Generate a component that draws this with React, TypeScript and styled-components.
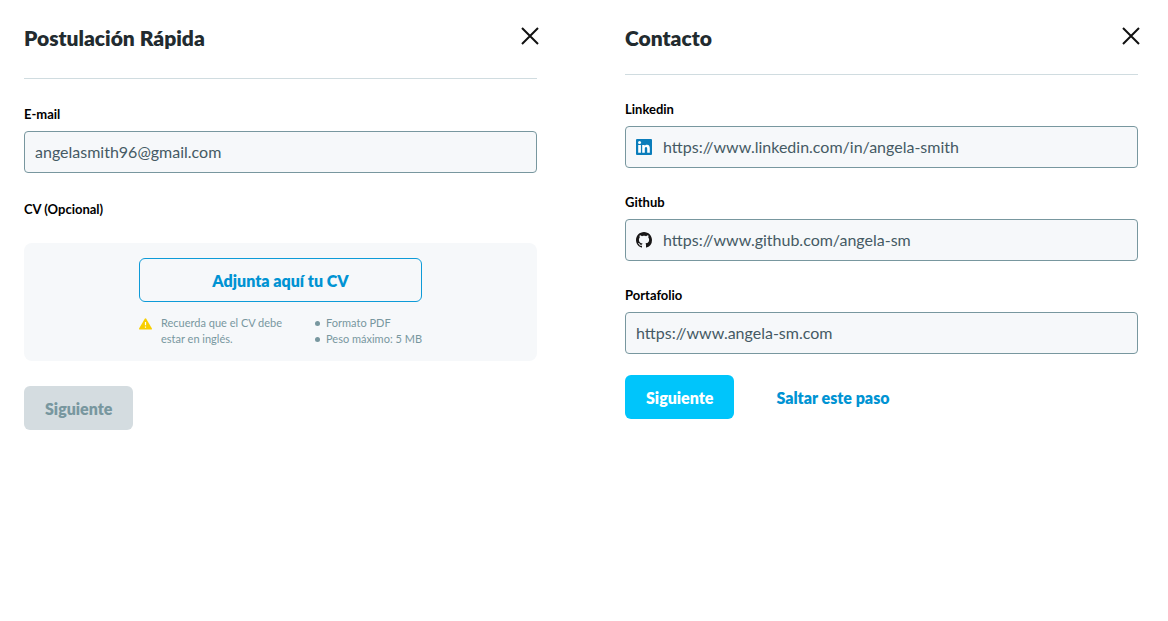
import React from "react";
import styled, { createGlobalStyle } from "styled-components";

const GlobalStyle = createGlobalStyle`
  *, *::before, *::after { box-sizing: border-box; }
  body {
    margin: 0;
    background: #ffffff;
    color: #000000;
    font-family: Lato, "Liberation Sans", sans-serif;
  }
  button, input { font-family: inherit; }
`;

const Page = styled.main`
  display: grid;
  grid-template-columns: repeat(2, minmax(0, 1fr));
  column-gap: 88px;
  align-items: start;
  padding: 24px 30px 24px 24px;
`;

const Panel = styled.form`
  display: flex;
  flex-direction: column;
`;

const Header = styled.header<{ $tall?: boolean }>`
  display: flex;
  justify-content: space-between;
  align-items: flex-start;
  height: ${(p) => (p.$tall ? 55 : 51)}px;
  border-bottom: 1px solid #d0dce0;
`;

const Title = styled.h2`
  margin: 0;
  color: #222b2f;
  font-size: 21px;
  line-height: 28px;
  font-weight: 800;
`;

const CloseButton = styled.button`
  display: flex;
  margin: 0 -5px 0 0;
  padding: 0;
  border: 0;
  background: none;
  color: #111111;
  cursor: pointer;
`;

const Fields = styled.div<{ $top: number; $gap: number }>`
  display: flex;
  flex-direction: column;
  gap: ${(p) => p.$gap}px;
  padding-top: ${(p) => p.$top}px;
`;

const FieldGroup = styled.div`
  display: flex;
  flex-direction: column;
  gap: 8px;
`;

const Label = styled.label`
  font-size: 13px;
  line-height: 18px;
  font-weight: 700;
`;

const InputBox = styled.div`
  display: flex;
  align-items: center;
  gap: 11px;
  height: 42px;
  padding: 0 10px;
  border: 1px solid #78979f;
  border-radius: 4px;
  background: #f6f8fa;
`;

const Input = styled.input`
  flex: 1;
  min-width: 0;
  padding: 0;
  border: 0;
  outline: 0;
  background: transparent;
  color: #455a64;
  font-size: 16px;
  line-height: 24px;
`;

const UploadArea = styled.div`
  display: flex;
  justify-content: center;
  margin-top: 25px;
  padding: 15px 16px 14px;
  border-radius: 8px;
  background: #f6f8fa;
`;

const UploadContent = styled.div`
  display: flex;
  flex-direction: column;
  gap: 13px;
  width: 283px;
`;

const Button = styled.button<{ $variant: "primary" | "outline" | "text" }>`
  height: 44px;
  padding: 1px 20px 0;
  border-radius: 6px;
  border: 1px solid
    ${(p) => (p.$variant === "outline" ? "#0e9bd8" : "transparent")};
  background: ${(p) => (p.$variant === "primary" ? "#00c5fb" : "transparent")};
  color: ${(p) => (p.$variant === "primary" ? "#ffffff" : "#0093d3")};
  font-size: 16px;
  line-height: 24px;
  font-weight: 800;
  cursor: pointer;

  &:disabled {
    background: #d4dce0;
    color: #78979f;
    cursor: default;
  }
`;

const Notes = styled.div`
  display: flex;
  justify-content: space-between;
  color: #78979f;
  font-size: 11px;
  line-height: 16px;
`;

const Warning = styled.p`
  display: flex;
  gap: 9px;
  width: 148px;
  margin: 0;

  svg { flex: none; margin-top: 3px; }
`;

const Rules = styled.ul`
  margin: 0;
  padding: 0;
  list-style: none;

  li {
    display: flex;
    align-items: center;
    gap: 6px;
  }

  li::before {
    content: "";
    width: 5px;
    height: 5px;
    border-radius: 50%;
    background: #78979f;
  }
`;

const Actions = styled.div<{ $top: number }>`
  display: flex;
  gap: 21px;
  padding-top: ${(p) => p.$top}px;
`;

const CloseIcon = () => (
  <svg width="24" height="24" viewBox="0 0 24 24" fill="none" aria-hidden="true">
    <path d="M4 4L20 20M20 4L4 20" stroke="currentColor" strokeWidth="2" />
  </svg>
);

const WarningIcon = () => (
  <svg width="13" height="12" viewBox="0 0 13 12" aria-hidden="true">
    <path
      d="M5.8 0.8Q6.5 -0.3 7.2 0.8L12.8 10.3Q13.3 11.5 12.1 11.5H0.9Q-0.3 11.5 0.2 10.3Z"
      fill="#f8cf00"
    />
    <path d="M6.5 4V7.3M6.5 8.5V9.8" stroke="#ffffff" strokeWidth="1.2" />
  </svg>
);

const LinkedinIcon = () => (
  <svg width="16" height="16" viewBox="0 0 16 16" aria-hidden="true">
    <rect width="16" height="16" rx="1" fill="#0a7dbb" />
    <path
      d="M2.2 6H4.9V13.7H2.2ZM6.2 6H8.7V7C9.1 6.3 9.9 5.8 11 5.8C13.2 5.8 13.8 7.3 13.8 9.4V13.7H11.2V10C11.2 8.9 11 8.1 10 8.1C9.1 8.1 8.8 8.8 8.8 9.9V13.7H6.2Z"
      fill="#ffffff"
    />
    <circle cx="3.55" cy="3.6" r="1.5" fill="#ffffff" />
  </svg>
);

const GithubIcon = () => (
  <svg width="16" height="16" viewBox="0 0 16 16" aria-hidden="true">
    <path
      fill="#191717"
      d="M8 0C3.58 0 0 3.58 0 8c0 3.54 2.29 6.53 5.47 7.59.4.07.55-.17.55-.38 0-.19-.01-.82-.01-1.49-2.01.37-2.53-.49-2.69-.94-.09-.23-.48-.94-.82-1.13-.28-.15-.68-.52-.01-.53.63-.01 1.08.58 1.23.82.72 1.21 1.87.87 2.33.66.07-.52.28-.87.51-1.07-1.78-.2-3.64-.89-3.64-3.95 0-.87.31-1.59.82-2.15-.08-.2-.36-1.02.08-2.12 0 0 .67-.21 2.2.82.64-.18 1.32-.27 2-.27s1.36.09 2 .27c1.53-1.04 2.2-.82 2.2-.82.44 1.1.16 1.92.08 2.12.51.56.82 1.27.82 2.15 0 3.07-1.87 3.75-3.65 3.95.29.25.54.73.54 1.48 0 1.07-.01 1.93-.01 2.2 0 .21.15.46.55.38A8.01 8.01 0 0 0 16 8c0-4.42-3.58-8-8-8Z"
    />
  </svg>
);

interface FieldProps {
  id: string;
  label: string;
  value: string;
  type: string;
  icon?: React.ReactNode;
}

const Field = ({ id, label, value, type, icon }: FieldProps) => (
  <FieldGroup>
    <Label htmlFor={id}>{label}</Label>
    <InputBox>
      {icon}
      <Input id={id} type={type} defaultValue={value} />
    </InputBox>
  </FieldGroup>
);

const PanelHeader = ({ title, tall }: { title: string; tall?: boolean }) => (
  <Header $tall={tall}>
    <Title>{title}</Title>
    <CloseButton type="button" aria-label="Cerrar">
      <CloseIcon />
    </CloseButton>
  </Header>
);

export default function App() {
  return (
    <>
      <GlobalStyle />
      <Page>
        <Panel>
          <PanelHeader title="Postulación Rápida" tall />
          <Fields $top={26} $gap={27}>
            <Field id="email" label="E-mail" type="email" value="angelasmith96@gmail.com" />
            <Label htmlFor="cv">CV (Opcional)</Label>
          </Fields>
          <UploadArea>
            <UploadContent>
              <Button id="cv" type="button" $variant="outline">
                Adjunta aquí tu CV
              </Button>
              <Notes>
                <Warning>
                  <WarningIcon />
                  <span>Recuerda que el CV debe estar en inglés.</span>
                </Warning>
                <Rules>
                  <li>Formato PDF</li>
                  <li>Peso máximo: 5 MB</li>
                </Rules>
              </Notes>
            </UploadContent>
          </UploadArea>
          <Actions $top={25}>
            <Button type="submit" $variant="primary" disabled>
              Siguiente
            </Button>
          </Actions>
        </Panel>

        <Panel>
          <PanelHeader title="Contacto" />
          <Fields $top={25} $gap={25}>
            <Field
              id="linkedin"
              label="Linkedin"
              type="url"
              value="https://www.linkedin.com/in/angela-smith"
              icon={<LinkedinIcon />}
            />
            <Field
              id="github"
              label="Github"
              type="url"
              value="https://www.github.com/angela-sm"
              icon={<GithubIcon />}
            />
            <Field id="portfolio" label="Portafolio" type="url" value="https://www.angela-sm.com" />
          </Fields>
          <Actions $top={21}>
            <Button type="button" $variant="primary">
              Siguiente
            </Button>
            <Button type="button" $variant="text">
              Saltar este paso
            </Button>
          </Actions>
        </Panel>
      </Page>
    </>
  );
}
